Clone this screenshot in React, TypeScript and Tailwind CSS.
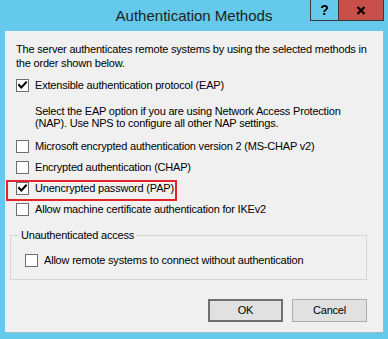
import React from "react";

function CheckBox({ checked }: { checked?: boolean }) {
  return (
    <div className="w-[13px] h-[13px] border border-[#6d6d6d] bg-white flex items-center justify-center shrink-0">
      {checked && (
        <svg width="11" height="11" viewBox="0 0 11 11">
          <path d="M2 5 L4.3 7.5 L9 2.5" fill="none" stroke="#000" strokeWidth="2" strokeLinecap="square" />
        </svg>
      )}
    </div>
  );
}

function Row({ label, checked, className = "" }: { label: string; checked?: boolean; className?: string }) {
  return (
    <div className={`h-[21px] flex items-center gap-[6px] ${className}`}>
      <CheckBox checked={checked} />
      <span>{label}</span>
    </div>
  );
}

export default function App() {
  return (
    <div className="w-[388px] h-[339px] bg-[#64c9ea] flex flex-col font-['Liberation_Sans',Arial,sans-serif] text-black overflow-hidden">
      <div className="h-[31px] relative shrink-0">
        <div className="text-center text-[15px] leading-[31px] text-[#1e1e1e]">Authentication Methods</div>
        <div className="absolute top-0 right-[4px] flex h-[21px]">
          <div className="w-[28px] h-full border-l border-b border-[#3a3a3a] flex items-center justify-center text-[14px] font-bold leading-none">?</div>
          <div className="w-[46px] h-full bg-[#c7514a] border-l border-r border-b border-[#3a3a3a] flex items-center justify-center">
            <svg width="10" height="9" viewBox="0 0 10 9">
              <path d="M1.5 1 L8.5 8 M8.5 1 L1.5 8" stroke="#000" strokeWidth="2.2" />
            </svg>
          </div>
        </div>
      </div>
      <div className="mx-[5px] h-[301px] bg-[#f0f0f0] shadow-[1px_1px_0_#9fb8c2] flex flex-col text-[11px] leading-[13px] tracking-[-0.2px] whitespace-nowrap pl-[11px] pr-[16px] pt-[11px]">
        <div className="leading-[14px]">
          The server authenticates remote systems by using the selected methods in
          <br />
          the order shown below.
        </div>
        <Row className="mt-[5px]" checked label="Extensible authentication protocol (EAP)" />
        <div className="mt-[9px] ml-[19px] leading-[12px]">
          Select the EAP option if you are using Network Access Protection
          <br />
          (NAP). Use NPS to configure all other NAP settings.
        </div>
        <Row className="mt-[7px]" label="Microsoft encrypted authentication version 2 (MS-CHAP v2)" />
        <Row label="Encrypted authentication (CHAP)" />
        <div className="relative">
          <div className="absolute left-[-10px] top-[2px] w-[171px] h-[21px] border-2 border-[#e3242b]" />
          <Row checked label="Unencrypted password (PAP)" />
        </div>
        <Row label="Allow machine certificate authentication for IKEv2" />
        <fieldset className="mt-[9px] ml-[-6px] mr-0 border border-[#d5d5d5] h-[51px] px-[14px]">
          <legend className="ml-[-6px] px-[2px] leading-[13px]">Unauthenticated access</legend>
          <div className="h-[21px] flex items-center gap-[6px] mt-[8px]">
            <CheckBox />
            <span>Allow remote systems to connect without authentication</span>
          </div>
        </fieldset>
        <div className="flex justify-end gap-[9px] mt-[19px]">
          <button className="w-[75px] h-[23px] bg-[#e1e1e1] border-2 border-[#6f6f6f] text-[11px]">OK</button>
          <button className="w-[75px] h-[23px] bg-[#e1e1e1] border border-[#adadad] text-[11px]">Cancel</button>
        </div>
      </div>
    </div>
  );
}
